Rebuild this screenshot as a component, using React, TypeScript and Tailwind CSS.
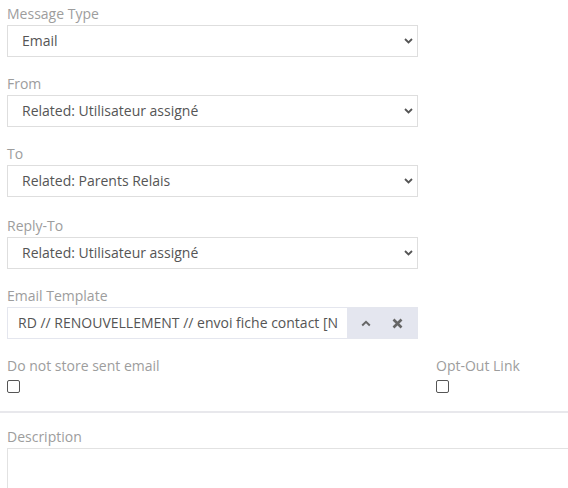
import { useState } from "react";

const SELECTS = [
  { label: "Message Type", value: "Email" },
  { label: "From", value: "Related: Utilisateur assigné" },
  { label: "To", value: "Related: Parents Relais" },
  { label: "Reply-To", value: "Related: Utilisateur assigné", extra: true },
];

function ChevronDown() {
  return (
    <svg width="9" height="6" viewBox="0 0 9 6" className="text-[#555]">
      <path d="M1 1l3.5 3.5L8 1" fill="none" stroke="currentColor" strokeWidth="1.8" />
    </svg>
  );
}

function SelectField({ label, value, extra }: { label: string; value: string; extra?: boolean }) {
  return (
    <div className={extra ? "mt-[2px] flex flex-col" : "flex flex-col"}>
      <label className="h-5 text-sm leading-5 text-[#9d9d9d]">{label}</label>
      <div className="mt-px flex h-8 w-[411px] items-center justify-between border border-[#dedede] bg-white pl-[14px] pr-[4px] text-sm text-[#555]">
        <span>{value}</span>
        <ChevronDown />
      </div>
    </div>
  );
}

export default function App() {
  const [noStore, setNoStore] = useState(false);
  const [optOut, setOptOut] = useState(false);

  return (
    <div
      className="h-[488px] w-[568px] overflow-hidden bg-white"
      style={{ fontFamily: '"Open Sans", "Noto Sans", sans-serif' }}
    >
      <div className="flex flex-col gap-[17px] px-[7px] pt-1">
        {SELECTS.map((s) => (
          <SelectField key={s.label} label={s.label} value={s.value} extra={s.extra} />
        ))}

        {/* Email template */}
        <div className="flex flex-col">
          <label className="h-5 text-sm leading-5 text-[#9d9d9d]">Email Template</label>
          <div className="mt-px flex h-8 w-[411px] border border-[#e4e6ee] bg-white text-sm text-[#555]">
            <div className="flex flex-1 items-center overflow-hidden whitespace-nowrap pl-[10px]">
              RD // RENOUVELLEMENT // envoi fiche contact [N
            </div>
            <div className="flex w-[70px] items-center justify-around bg-[#e4e6ef] px-1">
              <svg width="10" height="7" viewBox="0 0 10 7" className="text-[#666]">
                <path d="M1.2 5.5L5 1.8l3.8 3.7" fill="none" stroke="currentColor" strokeWidth="2" />
              </svg>
              <svg width="11" height="11" viewBox="0 0 11 11" className="text-[#666]">
                <path d="M1.5 1.5l8 8M9.5 1.5l-8 8" fill="none" stroke="currentColor" strokeWidth="2.6" />
              </svg>
            </div>
          </div>
        </div>
      </div>

      {/* Checkboxes */}
      <div className="mt-[17px] grid grid-cols-[429px_1fr] px-[7px]">
        <div className="flex flex-col">
          <span className="h-5 text-sm leading-5 text-[#9d9d9d]">Do not store sent email</span>
          <input
            type="checkbox"
            checked={noStore}
            onChange={(e) => setNoStore(e.target.checked)}
            className="mt-[4px] h-[13px] w-[13px] appearance-none rounded-[2px] border border-[#555] bg-white"
          />
        </div>
        <div className="flex flex-col">
          <span className="h-5 text-sm leading-5 text-[#9d9d9d]">Opt-Out Link</span>
          <input
            type="checkbox"
            checked={optOut}
            onChange={(e) => setOptOut(e.target.checked)}
            className="mt-[4px] h-[13px] w-[13px] appearance-none rounded-[2px] border border-[#555] bg-white"
          />
        </div>
      </div>

      <div className="mt-[18px] h-[2px] w-full bg-[#e8e8ec]" />

      {/* Description */}
      <div className="flex flex-col px-[7px] pt-[14px]">
        <label className="h-5 text-sm leading-5 text-[#9d9d9d]">Description</label>
        <textarea className="mt-px h-20 w-[600px] resize-none border border-[#e2e2e2] bg-white" />
      </div>
    </div>
  );
}
